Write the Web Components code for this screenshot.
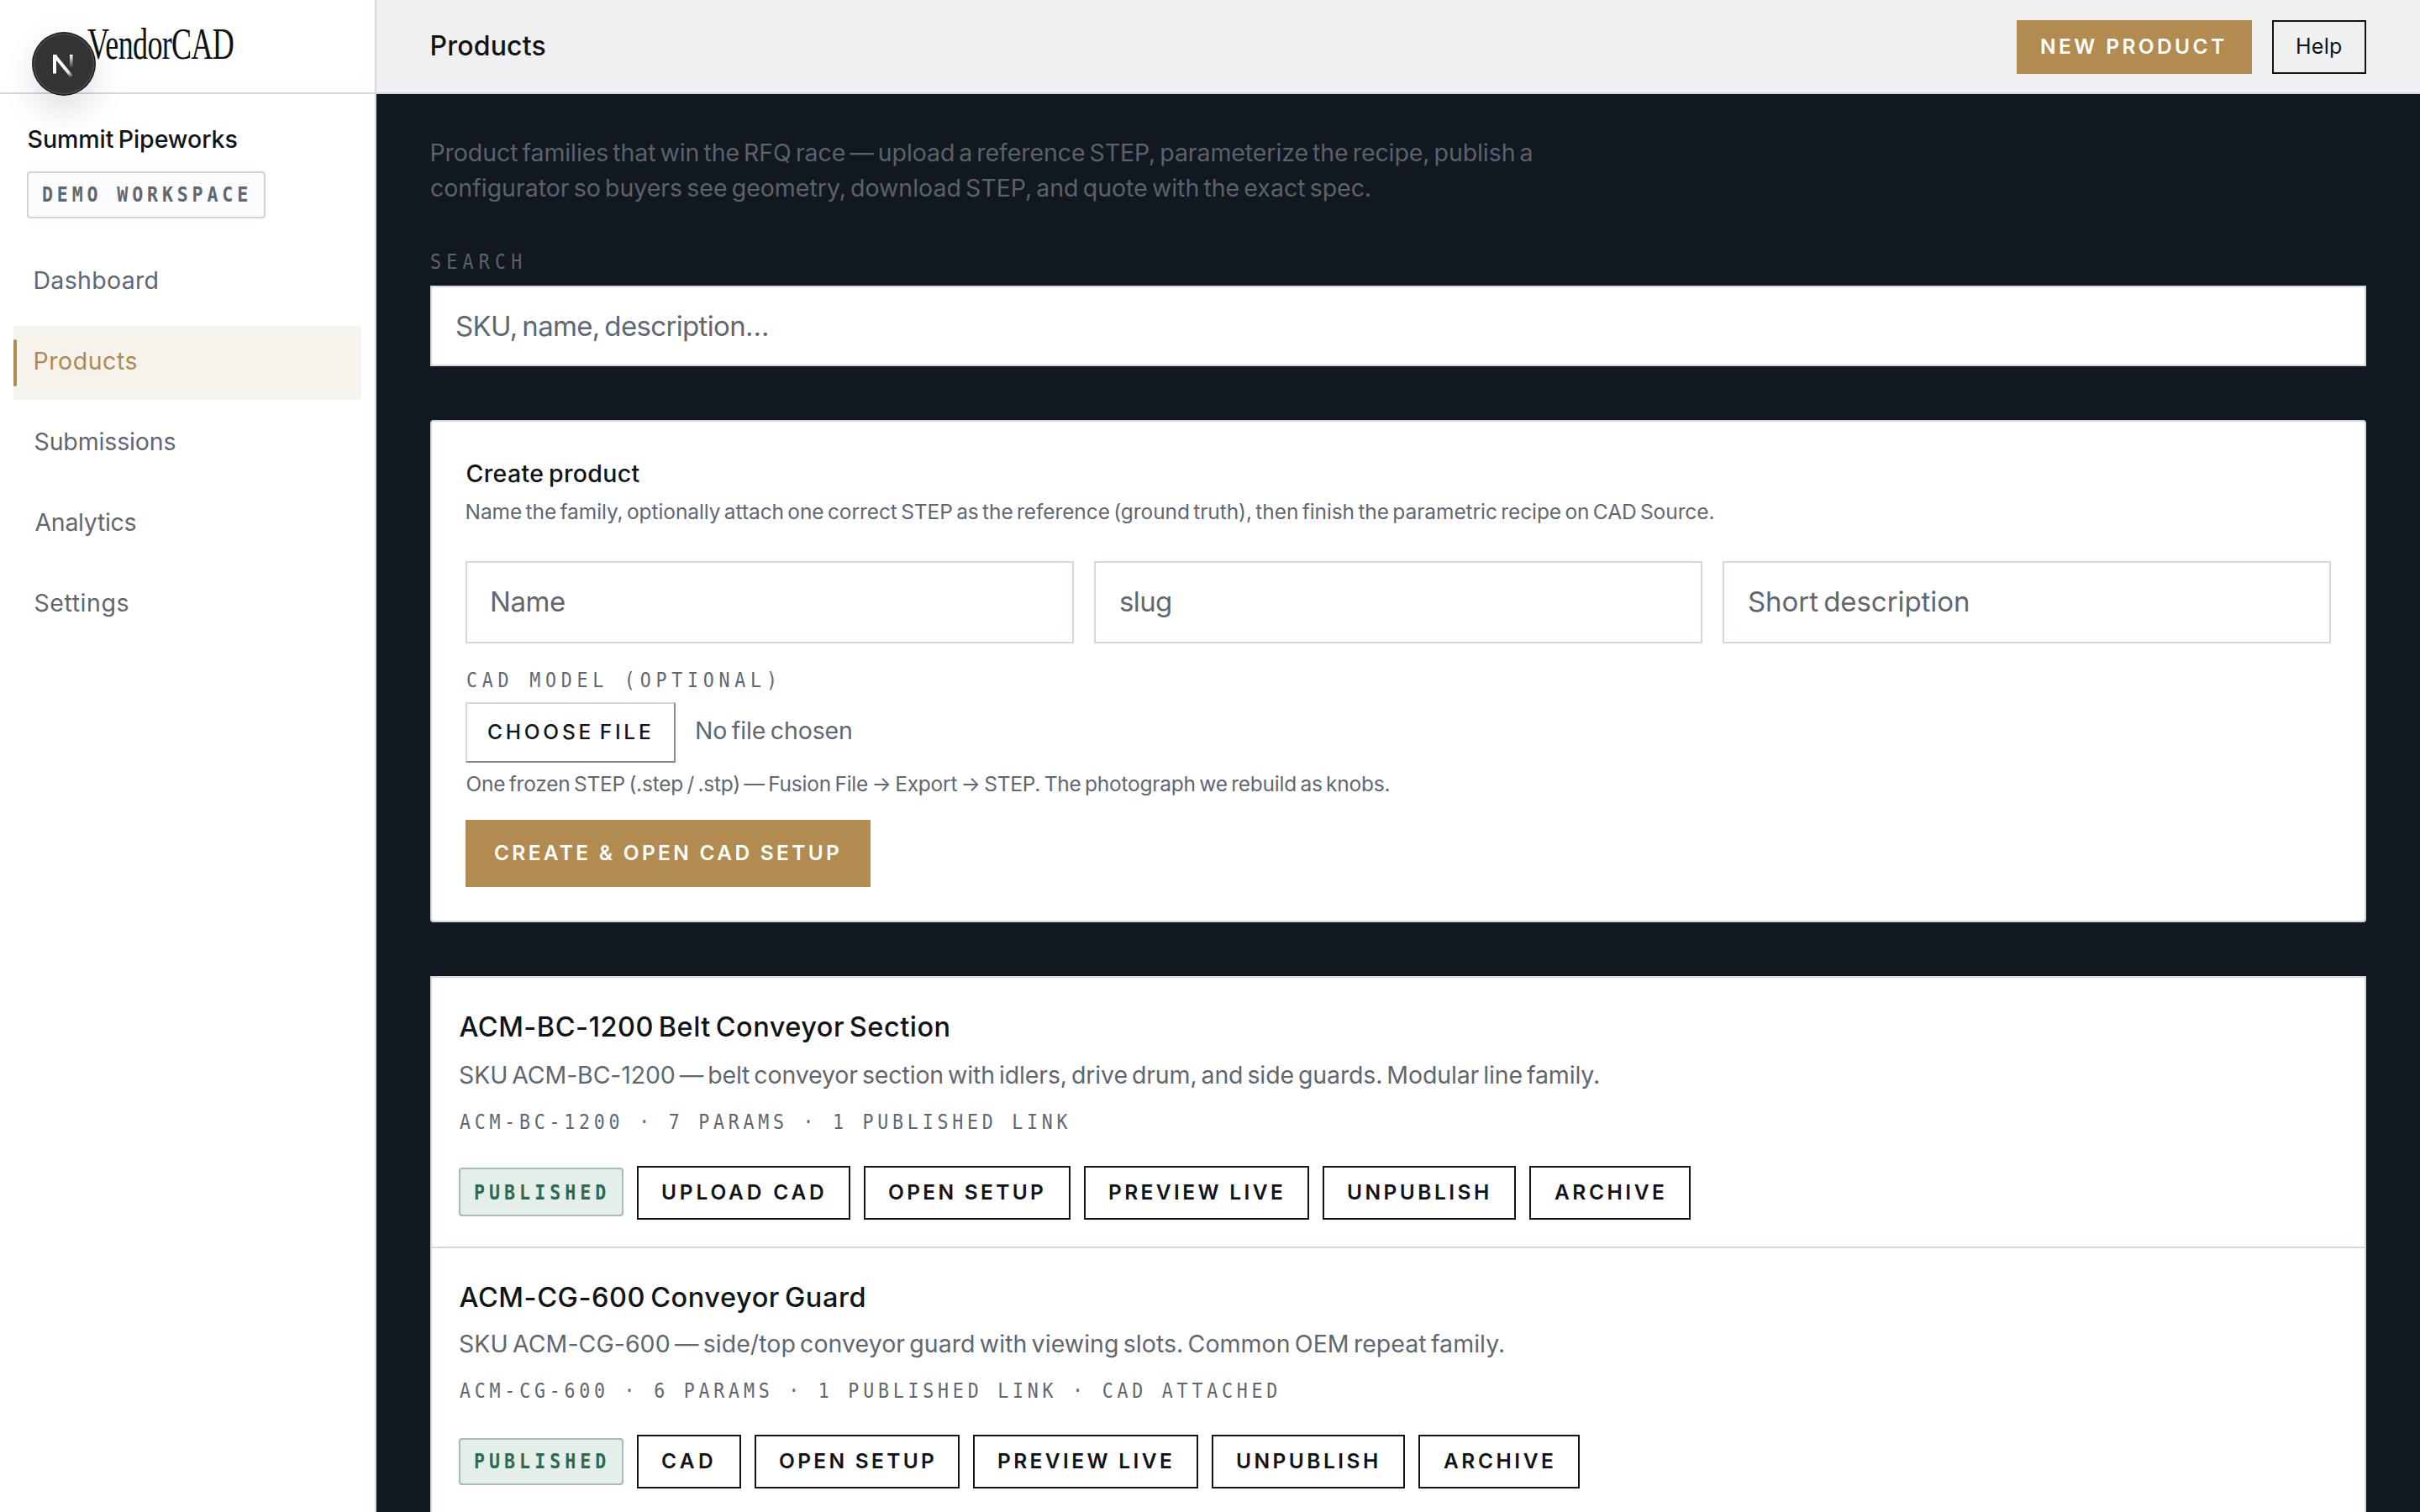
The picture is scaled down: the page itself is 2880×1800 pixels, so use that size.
<!DOCTYPE html>
<html lang="en">
<head>
<meta charset="utf-8">
<title>VendorCAD – Products</title>
<style>
html,body{margin:0;height:100%;overflow:hidden}
body{font-family:Inter,"Liberation Sans",sans-serif;color:#111417;background:#12181f;
--ink:#111417;--muted:#5f6770;--line:#d0d7e1;--gold:#b18b4f}
</style>
</head>
<body>
<vc-app></vc-app>
<script>
const ctx = document.createElement('canvas').getContext('2d');
const FONTS = {
  sans: 'Inter, "Liberation Sans", sans-serif',
  mono: '"DejaVu Sans Mono", "Liberation Mono", monospace',
  serif: '"Liberation Serif", serif'
};
function define(name, css, html, init) {
  customElements.define(name, class extends HTMLElement {
    connectedCallback() {
      if (this.shadowRoot) return;
      const root = this.attachShadow({ mode: 'open' });
      root.innerHTML = '<style>*{box-sizing:border-box}' + css + '</style>' +
        (typeof html === 'function' ? html(this) : html);
      if (init) init(this, root);
    }
  });
}

/* One line of text. s: font size, b: baseline from the top, h: box height,
   w: inked width (tracking is derived from it), dx: inset of the first stroke. */
define('vc-text',
  `:host{display:block;white-space:nowrap;flex:none}
   span{display:block;white-space:pre;width:max-content;transform-origin:0 0}`,
  el => `<span>${el.getAttribute('t').replace(/&/g, '&amp;')}</span>`,
  (el, root) => {
    const n = (k, d) => el.hasAttribute(k) ? parseFloat(el.getAttribute(k)) : d;
    const text = el.getAttribute('t'), span = root.querySelector('span');
    const mono = el.getAttribute('f') === 'mono';
    const s = n('s', 28), wt = n('wt', 400), w = n('w', 0), sx = n('sx', mono ? .9 : 1), dx = n('dx', 0);
    const family = FONTS[el.getAttribute('f') || 'sans'];
    const ws = n('ws', 0) * s;
    ctx.font = `${wt} ${s}px ${family}`;
    const m = ctx.measureText(text);
    const spaces = text.split(' ').length - 1;
    const ink = m.actualBoundingBoxLeft + m.actualBoundingBoxRight + ws * spaces;
    const ls = w ? (w / sx - ink) / (text.length - 1) : 0;
    const lh = 2 * (n('b', 30) - (m.fontBoundingBoxAscent - m.fontBoundingBoxDescent) / 2);
    span.style.cssText = `font:${wt} ${s}px/${lh}px ${family};letter-spacing:${ls}px;word-spacing:${ws}px;` +
      `margin-left:${dx + m.actualBoundingBoxLeft * sx}px;` + (sx !== 1 ? `transform:scaleX(${sx});` : '');
    el.style.height = n('h', 40) + 'px';
    if (w) el.style.width = dx + w + 'px';
    if (el.hasAttribute('c')) el.style.color = el.getAttribute('c');
  });

define('vc-button',
  `:host{display:block;height:64px;flex:none;border:2px solid var(--ink);color:var(--ink)}
   :host([kind=gold]){background:var(--gold);border-color:var(--gold);color:#fff}`,
  el => {
    const a = (k, d) => el.getAttribute(k) || d;
    return `<vc-text t="${a('label').replace('&', '&amp;')}" s="${a('s', 24.5)}" wt="${a('wt', 600)}" b="${a('b', 38)}" h="50" dx="${a('dx', 28)}" w="${a('tw')}"></vc-text>`;
  },
  el => { el.style.width = el.getAttribute('bw') + 'px'; if (el.hasAttribute('bh')) el.style.height = el.getAttribute('bh') + 'px'; });

define('vc-chip',
  `:host{display:block;box-sizing:border-box;flex:none;border:2px solid #d0d4dd;border-radius:4px;background:#fafbfd;color:var(--muted)}
   :host([kind=ok]){background:#e6eeea;border-color:#a3bfb3;color:#2c6b50}`,
  `<slot></slot>`);

define('vc-field',
  `:host{display:block;box-sizing:border-box;border:2px solid var(--line);background:#fff;color:var(--muted);flex:1 1 0}`,
  el => `<vc-text t="${el.getAttribute('hint')}" s="33" b="${el.getAttribute('b')}" h="90" dx="29" w="${el.getAttribute('tw')}" ws="-.09"></vc-text>`);

define('vc-nav-item',
  `:host{display:flex;align-items:center;height:88px;border-radius:4px;color:var(--muted)}
   :host([active]){background:#f6f3ed;color:#b08a50}
   i{width:4px;height:56px;border-radius:2px;flex:none}
   :host([active]) i{background:var(--gold)}`,
  el => `<i></i><vc-text t="${el.getAttribute('label')}" s="28.5" b="52.5" h="88" dx="21.5" w="${el.getAttribute('tw')}"></vc-text>`);

define('vc-devtools',
  `:host{display:block;position:absolute;left:38px;top:38px;width:76px;height:76px;border-radius:50%;
    box-shadow:0 22px 44px -4px rgba(0,0,0,.13),0 0 56px rgba(0,0,0,.03)}
   svg{display:block}`,
  `<svg width="76" height="76" viewBox="0 0 76 76">
    <defs>
      <linearGradient id="d" gradientUnits="userSpaceOnUse" x1="40" y1="42" x2="49" y2="53"><stop stop-color="#fff"/><stop offset=".5" stop-color="#fff" stop-opacity=".85"/><stop offset="1" stop-color="#fff" stop-opacity="0"/></linearGradient>
      <linearGradient id="s" gradientUnits="userSpaceOnUse" x1="0" y1="27" x2="0" y2="43"><stop stop-color="#fff"/><stop offset="1" stop-color="#fff" stop-opacity="0"/></linearGradient>
    </defs>
    <circle cx="38" cy="38" r="38" fill="#171717"/>
    <circle cx="38" cy="38" r="35.7" fill="#333" stroke="#4c4c4c" stroke-width="1.6"/>
    <rect x="25" y="27" width="4" height="22.5" fill="#fff"/>
    <path d="M27 28.2L47.5 53.2" stroke="url(#d)" stroke-width="4" fill="none"/>
    <rect x="25" y="27" width="4.6" height="3" fill="#fff"/>
    <rect x="45" y="27" width="3.6" height="17" fill="url(#s)"/>
  </svg>`);

define('vc-sidebar',
  `:host{display:flex;flex-direction:column;width:448px;box-sizing:border-box;flex:none;background:#fff;border-right:2px solid var(--line);position:relative}
   header{height:112px;border-bottom:2px solid var(--line)}
   .org{padding-left:32px}
   vc-chip{width:284px;height:56px}
   nav{display:flex;flex-direction:column;gap:8px;padding:0 16px;margin-top:32px}
   .org,nav{position:relative;z-index:1}`,
  `<header><vc-text f="serif" t="VendorCAD" s="53" b="70" h="110" dx="104" w="174" sx=".68" c="#111"></vc-text></header>
   <div class="org">
     <vc-text t="Summit Pipeworks" wt="500" s="28.5" b="64" h="92" dx="1.5" w="249" ws="-.08"></vc-text>
     <vc-chip><vc-text f="mono" t="DEMO WORKSPACE" wt="700" s="24" b="34.5" h="52" dx="17" w="243"></vc-text></vc-chip>
   </div>
   <nav>
     <vc-nav-item label="Dashboard" tw="146"></vc-nav-item>
     <vc-nav-item label="Products" tw="121" active></vc-nav-item>
     <vc-nav-item label="Submissions" tw="167"></vc-nav-item>
     <vc-nav-item label="Analytics" tw="120"></vc-nav-item>
     <vc-nav-item label="Settings" tw="111"></vc-nav-item>
   </nav>
   <vc-devtools></vc-devtools>`);

define('vc-topbar',
  `:host{display:flex;box-sizing:border-box;height:112px;background:#f0f0f0;border-bottom:2px solid var(--line);padding:0 64px;justify-content:space-between}
   div{display:flex;gap:24px;margin-top:24px}`,
  `<vc-text t="Products" wt="500" s="32" b="66" h="110" dx="1.5" w="135"></vc-text>
   <div><vc-button kind="gold" label="NEW PRODUCT" bw="280" dx="27" tw="218"></vc-button>
   <vc-button label="Help" wt="400" s="25" bw="112" dx="28" tw="53"></vc-button></div>`);

define('vc-create',
  `:host{display:block;box-sizing:border-box;height:598px;background:#fff;border:2px solid var(--line);border-radius:4px;padding:0 40px;color:var(--muted)}
   .fields{display:flex;gap:24px;height:98px}
   .file{display:flex;height:72px}
   .pick{width:250px;height:72px;border:2px solid var(--line);border-right-color:#868b8f;border-bottom-color:#868b8f;color:var(--ink)}`,
  `<vc-text t="Create product" wt="500" s="28.5" b="72" h="82" dx="1.5" w="206" ws="-.08" c="#111417"></vc-text>
   <vc-text t="Name the family, optionally attach one correct STEP as the reference (ground truth), then finish the parametric recipe on CAD Source." s="24.5" b="34.5" h="84" dx="1.5" w="1484" ws="-.1"></vc-text>
   <div class="fields"><vc-field hint="Name" b="58" tw="87"></vc-field><vc-field hint="slug" b="58" tw="60"></vc-field><vc-field hint="Short description" b="58" tw="261"></vc-field></div>
   <vc-text f="mono" t="CAD MODEL (OPTIONAL)" s="24" b="52" h="70" dx="1.5" w="365"></vc-text>
   <div class="file"><div class="pick"><vc-text t="CHOOSE FILE" wt="500" s="24.5" b="42" h="60" dx="25" w="193" ws="-.15"></vc-text></div>
   <vc-text t="No file chosen" s="28.5" b="44" h="70" dx="25" w="184" ws="-.08"></vc-text></div>
   <vc-text t="One frozen STEP (.step / .stp) — Fusion File → Export → STEP. The photograph we rebuild as knobs." s="24.5" b="34" h="68" dx="1.5" w="1098" ws="-.09"></vc-text>
   <vc-button kind="gold" label="CREATE &amp; OPEN CAD SETUP" bw="482" bh="80" b="46" dx="33" tw="409"></vc-button>`);

const ROWS = [
  { title: ['ACM-BC-1200 Belt Conveyor Section', 583],
    desc: ['SKU ACM-BC-1200 — belt conveyor section with idlers, drive drum, and side guards. Modular line family.', 1355],
    meta: ['ACM-BC-1200 · 7 PARAMS · 1 PUBLISHED LINK', 724], shift: 0,
    actions: [['UPLOAD CAD', 254, 192], ['OPEN SETUP', 246, 183], ['PREVIEW LIVE', 268, 206], ['UNPUBLISH', 230, 167], ['ARCHIVE', 192, 130]] },
  { title: ['ACM-CG-600 Conveyor Guard', 482],
    desc: ['SKU ACM-CG-600 — side/top conveyor guard with viewing slots. Common OEM repeat family.', 1242],
    meta: ['ACM-CG-600 · 6 PARAMS · 1 PUBLISHED LINK · CAD ATTACHED', 972], shift: 2,
    actions: [['CAD', 124, 60], ['OPEN SETUP', 244, 183], ['PREVIEW LIVE', 268, 206], ['UNPUBLISH', 230, 167], ['ARCHIVE', 192, 130]] }
];
define('vc-product',
  `:host{display:block;box-sizing:border-box;height:322px;border-bottom:2px solid var(--line);padding-left:32px;color:var(--muted)}
   .actions{display:flex;gap:16px}
   vc-chip{width:196px;height:58px;margin-top:2px}
   :host([row="1"]) vc-chip{height:56px;margin-top:4px}
   :host([row="1"]) vc-chip vc-text{margin-top:-2px}`,
  el => {
    const r = ROWS[el.getAttribute('row')];
    return `<vc-text t="${r.title[0]}" wt="500" s="32.5" b="70" h="${90 - r.shift}" dx=".5" w="${r.title[1]}" ws="-.1"  c="#111417"></vc-text>
    <vc-text t="${r.desc[0]}" s="28.5" b="36" h="60" dx="1" w="${r.desc[1]}" ws="-.1"></vc-text>
    <vc-text f="mono" t="${r.meta[0]}" s="24" b="30.5" h="74" dx="1" w="${r.meta[1]}"></vc-text>
    <div class="actions"><vc-chip kind="ok"><vc-text f="mono" t="PUBLISHED" wt="700" s="24" b="36.5" h="50" dx="17" w="156"></vc-text></vc-chip>
    ${r.actions.map(a => `<vc-button label="${a[0]}" bw="${a[1]}" tw="${a[2]}"></vc-button>`).join('')}</div>`;
  });

define('vc-app',
  `:host{display:flex;height:1800px;width:2880px;overflow:hidden}
   section{flex:1;display:flex;flex-direction:column;min-width:0}
   main{padding:0 64px;color:#5a626b}
   .search{display:flex;height:96px;margin-bottom:64px}
   .list{margin-top:64px;background:#fff;border:2px solid var(--line)}`,
  `<vc-sidebar></vc-sidebar>
   <section><vc-topbar></vc-topbar>
   <main>
     <vc-text t="Product families that win the RFQ race — upload a reference STEP, parameterize the recipe, publish a" s="28.5" b="80" h="101" dx="1.5" w="1309" ws="-.1"></vc-text>
     <vc-text t="configurator so buyers see geometry, download STEP, and quote with the exact spec." s="28.5" b="21" h="63" dx="1" w="1117" ws="-.1"></vc-text>
     <vc-text f="mono" t="SEARCH" s="24" b="44" h="64" dx="1" w="107"></vc-text>
     <div class="search"><vc-field hint="SKU, name, description…" b="58" tw="370"></vc-field></div>
     <vc-create></vc-create>
     <div class="list"><vc-product row="0"></vc-product><vc-product row="1"></vc-product></div>
   </main></section>`);
</script>
</body>
</html>
